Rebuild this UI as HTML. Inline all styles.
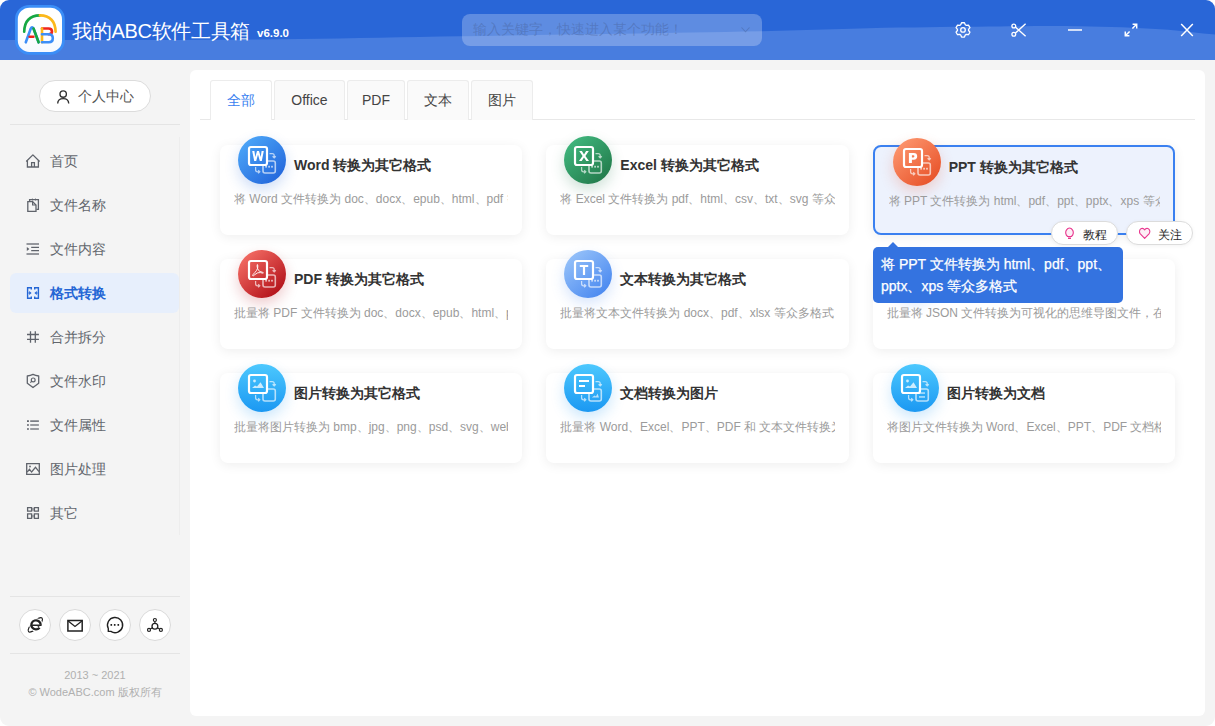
<!DOCTYPE html>
<html><head><meta charset="utf-8"><style>
*{box-sizing:border-box;margin:0;padding:0}
html,body{width:1215px;height:726px;overflow:hidden;background:#fff;font-family:"Liberation Sans",sans-serif}
#win{position:absolute;left:0;top:0;width:1215px;height:726px;background:#f4f4f4;border-radius:9px;overflow:hidden}
#hdr{position:absolute;left:0;top:0;width:1215px;height:60px;background:#2966d7}
#hdr svg{position:absolute;left:0;top:0}
.title{position:absolute;left:72px;top:18px;color:#fff;font-size:20px;line-height:26px;white-space:nowrap;letter-spacing:-0.3px}
.ver{position:absolute;left:257px;top:25.5px;color:#fff;font-size:11.5px;font-weight:bold;line-height:14px}
.search{position:absolute;left:462px;top:14px;width:300px;height:31.5px;border-radius:8px;background:rgba(255,255,255,0.25)}
.search span{position:absolute;left:11px;top:7px;font-size:14px;line-height:17px;color:rgba(70,95,150,0.42);white-space:nowrap}
.item{position:absolute;left:10px;width:169px;height:40px;border-radius:6px}
.item svg{position:absolute;left:10px;top:7px}
.item .tx{position:absolute;left:40px;top:11px;font-size:14px;line-height:18px;color:#62666d;white-space:nowrap}
.item.act{background:#e7effc}
.item.act .tx{color:#2466d5;font-weight:bold}
.pill{position:absolute;left:39px;top:80px;width:112px;height:32px;border-radius:16px;background:#fff;border:1px solid #dcdcdc}
.pill svg{position:absolute;left:16px;top:8px}
.pill span{position:absolute;left:38px;top:7px;font-size:14px;line-height:17px;color:#555;white-space:nowrap}
.hline{position:absolute;left:10px;width:170px;height:1px;background:#e4e4e4}
.vline{position:absolute;left:179px;top:137px;width:1px;height:398px;background:#ededed}
.cbtn{position:absolute;top:609px;width:32px;height:32px;border-radius:50%;background:#fff;border:1px solid #dadada}
.cbtn svg{position:absolute;left:0;top:0}
.foot{position:absolute;left:0;width:190px;text-align:center;font-size:11px;color:#b0b0b0;line-height:14px;white-space:nowrap}
#main{position:absolute;left:190px;top:70px;width:1015px;height:646px;background:#fff;border-radius:6px}
.tab{position:absolute;top:10px;height:40px;border:1px solid #ececec;border-bottom:none;background:#fafafa;border-radius:3px 3px 0 0;font-size:14px;color:#444;text-align:center;line-height:38px}
.tab.act{background:#fff;color:#3a7ff0}
.tabline{position:absolute;left:10px;top:49px;width:995px;height:1px;background:#e8e8e8}
.card{position:absolute;width:302.33px;height:90px;background:#fff;border-radius:8px;box-shadow:0 2px 12px rgba(0,0,0,0.07)}
.card .cir{position:absolute;left:18px;top:-9px;width:48px;height:48px;border-radius:50%}
.card .cir svg{position:absolute;left:0;top:0}
.card .t{position:absolute;left:74px;top:11px;font-size:14px;font-weight:bold;color:#333;line-height:18px;white-space:nowrap}
.card .d{position:absolute;left:14px;top:46px;width:274.3px;overflow:hidden;font-size:12px;color:#9b9b9b;line-height:16px;white-space:nowrap}
.card.hov{background:#edf2fd;border:2px solid #3a80f0}
.card.hov .cir{left:18px;top:-9px}
.card.hov .d{width:271px}
.hb{position:absolute;top:221px;height:24px;border-radius:12px;background:#fff;border:1px solid #dcdcdc;box-shadow:0 1px 4px rgba(0,0,0,0.05)}
.hb svg{position:absolute}
.hb span{position:absolute;left:31px;top:5px;font-size:11.7px;line-height:15px;color:#2a2a2a;white-space:nowrap}
.tip{position:absolute;left:873px;top:247px;width:250px;height:56px;background:#3473e0;border-radius:5px;color:#fff;font-size:14px;font-weight:normal;line-height:22px;padding:6px 0 0 8px;-webkit-text-stroke:0.25px #fff}
.tip:before{content:"";position:absolute;left:14px;top:-5px;border-left:6px solid transparent;border-right:6px solid transparent;border-bottom:6px solid #3473e0}
</style></head><body>
<div id="win">
 <div id="hdr">
  <svg width="1215" height="60"><path d="M0,40 C25.0,40.00 100.0,40.17 150,40 C200.0,39.83 248.3,39.63 300,39 C351.7,38.37 406.7,37.07 460,36.2 C513.3,35.33 570.0,34.62 620,33.8 C670.0,32.98 713.3,32.33 760,31.3 C806.7,30.27 860.0,28.42 900,27.6 C940.0,26.78 970.0,26.62 1000,26.4 C1030.0,26.18 1053.3,25.83 1080,26.3 C1106.7,26.77 1137.5,27.82 1160,29.2 C1182.5,30.58 1200.0,33.13 1215,34.6 C1230.0,36.07 1244.2,37.43 1250,38 L1250,60 L0,60 Z" fill="#487ddf"/></svg>
  <svg width="60" height="60" viewBox="0 0 60 60" style="left:10px;top:0px">
<defs><linearGradient id="lg" x1="0" y1="0" x2="0" y2="1"><stop offset="0.5" stop-color="#fff"/><stop offset="1" stop-color="#f6f9ff"/></linearGradient></defs><rect x="6.4" y="6.3" width="47.0" height="47.1" rx="13" fill="url(#lg)" stroke="#3b8ef7" stroke-width="2.8"/>
<path d="M14.2,31.8 Q14.5,15.8 29.9,15.4" fill="none" stroke="#16a843" stroke-width="2.6" stroke-linecap="round"/>
<path d="M29.9,15.4 Q45.2,15.8 45.6,31.8" fill="none" stroke="#fbb81b" stroke-width="2.6" stroke-linecap="round"/>
<path d="M15.8,42.3 L20.8,28.5 Q22,26 23.5,28.5 L28.6,42.3" fill="none" stroke="#3c8ef8" stroke-width="2.6" stroke-linecap="round" stroke-linejoin="round"/>
<path d="M23.5,28.5 L28.6,42.3" fill="none" stroke="#16a843" stroke-width="2.6" stroke-linecap="round"/>
<path d="M19.6,36.8 H23.4" fill="none" stroke="#f0241c" stroke-width="2.6" stroke-linecap="round"/>
<path d="M32,28.5 H38.5 Q42,28.5 42,31.5 Q42,34 38.8,34.3" fill="none" stroke="#f0241c" stroke-width="2.6" stroke-linecap="round"/>
<path d="M32,28.5 V42.3" fill="none" stroke="#fbb81b" stroke-width="2.6" stroke-linecap="round"/>
<path d="M32,34.3 H38.8 Q42.8,34.3 42.8,38.3 Q42.8,42.3 38.8,42.3 H32" fill="none" stroke="#3c8ef8" stroke-width="2.6" stroke-linecap="round"/>
</svg>
  <div class="title">我的ABC软件工具箱</div>
  <div class="ver">v6.9.0</div>
  <div class="search"><span>输入关键字，快速进入某个功能！</span><svg width="12" height="8" viewBox="0 0 12 8" style="left:278px;top:12px"><path d="M1.5,1.5 L5.5,5.8 L9.5,1.5" fill="none" stroke="rgba(70,95,150,0.42)" stroke-width="1.1"/></svg></div>
  
<svg width="20" height="20" viewBox="0 0 20 20" style="left:953px;top:20px"><path d="M7.72,4.79 L8.55,2.75 L11.45,2.75 L12.28,4.79 L13.29,5.37 L15.47,5.07 L16.92,7.58 L15.57,9.32 L15.57,10.48 L16.92,12.22 L15.47,14.73 L13.29,14.43 L12.28,15.01 L11.45,17.05 L8.55,17.05 L7.72,15.01 L6.71,14.43 L4.53,14.73 L3.08,12.22 L4.43,10.48 L4.43,9.32 L3.08,7.58 L4.53,5.07 L6.71,5.37 Z" fill="none" stroke="#fff" stroke-width="1.3" stroke-linejoin="round"/><circle cx="10" cy="9.9" r="2.3" fill="none" stroke="#fff" stroke-width="1.3"/></svg>
<svg width="20" height="20" viewBox="0 0 20 20" style="left:1009px;top:20px"><circle cx="4.8" cy="6" r="1.9" fill="none" stroke="#fff" stroke-width="1.3"/><circle cx="4.8" cy="14.2" r="1.9" fill="none" stroke="#fff" stroke-width="1.3"/><path d="M6.4,7.1 L16.6,16.3 M6.4,13.1 L16.6,3.7" stroke="#fff" stroke-width="1.4"/></svg>
<svg width="20" height="20" viewBox="0 0 20 20" style="left:1065px;top:20px"><path d="M3,10 H17" stroke="#fff" stroke-width="1.7"/></svg>
<svg width="20" height="20" viewBox="0 0 20 20" style="left:1121px;top:20px"><path d="M4.6,15.5 L8.6,11.5 M15.4,4.5 L11.4,8.5 M11.6,4.3 H15.7 V8.4 M4.3,11.6 V15.7 H8.4" fill="none" stroke="#fff" stroke-width="1.5"/></svg>
<svg width="20" height="20" viewBox="0 0 20 20" style="left:1177px;top:20px"><path d="M4.2,3.9 L15.8,16 M15.8,3.9 L4.2,16" stroke="#fff" stroke-width="1.5"/></svg>

 </div>
 <div id="side">
  <div class="pill"><svg width="14" height="16" viewBox="0 0 14 16"><circle cx="7.2" cy="5.1" r="3.2" fill="none" stroke="#333" stroke-width="1.4"/><path d="M1.7,14.6 Q1.7,9.6 7.2,9.6 Q12.7,9.6 12.7,14.6" fill="none" stroke="#333" stroke-width="1.4"/></svg><span>个人中心</span></div>
  <div class="hline" style="top:124px"></div>
  <div class="vline"></div>
  <div class="item" style="top:141px"><svg width="25" height="25" viewBox="0 0 25 25"><path d="M6.2,13.5 L12.9,6.9 L19.6,13.5" fill="none" stroke="#5f636b" stroke-width="1.3" stroke-linejoin="round"/><path d="M7.4,12.6 V19 H18.4 V12.6 M11.6,19 V14.6 H14.4 V19" fill="none" stroke="#5f636b" stroke-width="1.3"/></svg><div class="tx">首页</div></div>
<div class="item" style="top:185px"><svg width="25" height="25" viewBox="0 0 25 25"><path d="M9.6,8.9 V7.6 H18.4 V17.3 H16.4" fill="none" stroke="#5f636b" stroke-width="1.3"/><path d="M12.4,6.6 V8.4 M15.5,6.6 V8.4" stroke="#5f636b" stroke-width="1"/><path d="M7.8,9.6 H12.6 L16,13 V19.4 H7.8 Z" fill="none" stroke="#5f636b" stroke-width="1.3"/><path d="M12.6,9.6 V13 H16" fill="none" stroke="#5f636b" stroke-width="1.2"/></svg><div class="tx">文件名称</div></div>
<div class="item" style="top:229px"><svg width="25" height="25" viewBox="0 0 25 25"><path d="M6.5,8.1 H19 M6.5,17.9 H19" stroke="#5f636b" stroke-width="1.5" opacity="0.85"/><path d="M11.2,11.4 H19 M11.2,14.6 H19" stroke="#5f636b" stroke-width="1.3"/><path d="M6.8,11 L9.4,13 L6.8,15 Z" fill="#5f636b"/></svg><div class="tx">文件内容</div></div>
<div class="item act" style="top:273px"><svg width="25" height="25" viewBox="0 0 25 25"><path d="M11.3,9.4 V7.7 H7.6 V18.3 H11.3 V16.6 M14.7,9.4 V7.7 H18.4 V18.3 H14.7 V16.6" fill="none" stroke="#2466d5" stroke-width="1.4"/><path d="M7.6,13 H10 M16,13 H18.4" stroke="#2466d5" stroke-width="1.1" opacity="0.7"/><path d="M9.2,11.1 L11.6,13 L9.2,14.9 Z M16.8,11.1 L14.4,13 L16.8,14.9 Z" fill="#2466d5"/></svg><div class="tx">格式转换</div></div>
<div class="item" style="top:317px"><svg width="25" height="25" viewBox="0 0 25 25"><path d="M10.5,7.2 V18.8 M15.3,7.2 V18.8 M7,10.5 H18.9 M7,15.3 H18.9" fill="none" stroke="#5f636b" stroke-width="1.3"/></svg><div class="tx">合并拆分</div></div>
<div class="item" style="top:361px"><svg width="25" height="25" viewBox="0 0 25 25"><path d="M7.3,8 Q10.5,7.6 13,6.3 Q15.5,7.6 18.7,8 V15.3 L13,19.6 L7.3,15.3 Z" fill="none" stroke="#5f636b" stroke-width="1.3" stroke-linejoin="round"/><circle cx="13.2" cy="11.9" r="1.9" fill="none" stroke="#5f636b" stroke-width="1.2"/><path d="M11.8,13.3 L10.3,14.6" stroke="#5f636b" stroke-width="1.2"/></svg><div class="tx">文件水印</div></div>
<div class="item" style="top:405px"><svg width="25" height="25" viewBox="0 0 25 25"><path d="M7,9.1 H8.9 M7,13 H8.9 M7,17 H8.9" stroke="#5f636b" stroke-width="1.7"/><path d="M10.2,9.1 H18.9 M10.2,13 H18.9 M10.2,17 H18.9" stroke="#5f636b" stroke-width="1.6" opacity="0.8"/></svg><div class="tx">文件属性</div></div>
<div class="item" style="top:449px"><svg width="25" height="25" viewBox="0 0 25 25"><path d="M6.7,7.6 H19.3 V18.4 H6.7 Z" fill="none" stroke="#5f636b" stroke-width="1.3"/><path d="M7.2,16 L9.5,13.3 L11.6,16 L15.5,11.3 L19,15.6" fill="none" stroke="#5f636b" stroke-width="1.2"/><circle cx="10" cy="10.5" r="0.9" fill="#5f636b"/></svg><div class="tx">图片处理</div></div>
<div class="item" style="top:493px"><svg width="25" height="25" viewBox="0 0 25 25"><path d="M7.6,7.6 H11.6 V11.2 H7.6 Z M14.4,7.6 H18.4 V11.2 H14.4 Z M7.6,13.8 H11.6 V18.4 H7.6 Z M14.4,13.8 H18.4 V18.4 H14.4 Z" fill="none" stroke="#5f636b" stroke-width="1.3"/><path d="M11.6,9.4 H14.4 M11.6,16.1 H14.4" stroke="#5f636b" stroke-width="2.6" opacity="0.5"/></svg><div class="tx">其它</div></div>
  <div class="hline" style="top:596px"></div>
  <div class="cbtn" style="left:19px"><svg width="29" height="29" viewBox="0 0 29 29"><ellipse cx="15.3" cy="14.9" rx="9.6" ry="3.4" transform="rotate(-45 15.3 14.9)" fill="none" stroke="#222" stroke-width="1.2"/><path d="M20.7,14.85 A4.7,4.55 0 1 0 19.6,17.8" fill="none" stroke="#fff" stroke-width="4.2"/><path d="M20.7,14.85 A4.7,4.55 0 1 0 19.6,17.8" fill="none" stroke="#222" stroke-width="2.3"/><path d="M11.6,15.3 H21.6" stroke="#222" stroke-width="1.6"/></svg></div><div class="cbtn" style="left:59px"><svg width="29" height="29" viewBox="0 0 29 29"><path d="M7.9,10.6 H22.2 V21 H7.9 Z" fill="none" stroke="#222" stroke-width="1.5"/><path d="M8.2,11 L15,16.5 L21.9,11" fill="none" stroke="#222" stroke-width="1.3"/></svg></div><div class="cbtn" style="left:99px"><svg width="29" height="29" viewBox="0 0 29 29"><path d="M8.3,18.5 V21.4 H10.9 A7.6,7.6 0 1 0 8.3,18.5 Z" fill="none" stroke="#222" stroke-width="1.4" stroke-linejoin="round"/><rect x="10.5" y="14" width="1.6" height="1.8" fill="#222"/><rect x="13.9" y="14" width="1.6" height="1.8" fill="#222"/><rect x="17.5" y="14" width="1.6" height="1.8" fill="#222"/></svg></div><div class="cbtn" style="left:139px"><svg width="29" height="29" viewBox="0 0 29 29"><circle cx="14.9" cy="10" r="1.5" fill="none" stroke="#222" stroke-width="1.2"/><circle cx="9" cy="19.9" r="1.5" fill="none" stroke="#222" stroke-width="1.2"/><circle cx="20.9" cy="19.9" r="1.5" fill="none" stroke="#222" stroke-width="1.2"/><circle cx="14.9" cy="16.3" r="2.9" fill="none" stroke="#222" stroke-width="1.3"/><path d="M14.9,11.5 V13.4 M12.4,17.8 L10.3,19.1 M17.4,17.8 L19.6,19.1" stroke="#222" stroke-width="1.2"/></svg></div>
  <div class="hline" style="top:653px"></div>
  <div class="foot" style="top:668px">2013 ~ 2021</div>
  <div class="foot" style="top:685px">© WodeABC.com 版权所有</div>
 </div>
 <div id="main">
  <div class="tabline"></div>
  <div class="tab act" style="left:20px;width:62px">全部</div>
  <div class="tab" style="left:84px;width:71px">Office</div>
  <div class="tab" style="left:157px;width:58px">PDF</div>
  <div class="tab" style="left:217px;width:62px">文本</div>
  <div class="tab" style="left:281px;width:62px">图片</div>
  <div class="card" style="left:30.00px;top:75px"><div class="cir" style="box-shadow:0 6px 14px #2468dc38"><svg width="48" height="48" viewBox="0 0 48 48"><defs><linearGradient id="g0" gradientUnits="userSpaceOnUse" x1="7" y1="5" x2="41" y2="43"><stop offset="0" stop-color="#4ba4f7"/><stop offset="1" stop-color="#2468dc"/></linearGradient></defs><circle cx="24" cy="24" r="24" fill="url(#g0)"/><rect x="25" y="25" width="12.3" height="12" rx="2" fill="none" stroke="rgba(255,255,255,0.65)" stroke-width="1.6"/><rect x="27.200000000000003" y="29.8" width="1.8" height="1.8" fill="rgba(255,255,255,0.65)"/><rect x="30.200000000000003" y="29.8" width="1.8" height="1.8" fill="rgba(255,255,255,0.65)"/><rect x="33.1" y="29.8" width="1.8" height="1.8" fill="rgba(255,255,255,0.65)"/><path d="M31.5,17.6 H34.2 Q36.2,17.6 36.2,19.6 V21" fill="none" stroke="rgba(255,255,255,0.65)" stroke-width="1.25"/><path d="M34.6,20.2 L36.2,21.8 L37.8,20.2" fill="none" stroke="rgba(255,255,255,0.65)" stroke-width="1.25"/><path d="M17.6,31 V33.8 Q17.6,35.8 19.6,35.8 H21" fill="none" stroke="rgba(255,255,255,0.65)" stroke-width="1.25"/><path d="M20.2,34.2 L21.8,35.8 L20.2,37.4" fill="none" stroke="rgba(255,255,255,0.65)" stroke-width="1.25"/><rect x="11" y="11" width="18" height="18" rx="2" fill="url(#g0)" stroke="#fff" stroke-width="2.2"/><path d="M14.2,15 L16.2,25 H18.2 L20,18.5 L21.8,25 H23.8 L25.8,15 H23.6 L22.7,21 L21,15 H19 L17.3,21 L16.4,15 Z" fill="#fff"/></svg></div><div class="t">Word 转换为其它格式</div><div class="d">将 Word 文件转换为 doc、docx、epub、html、pdf 等众多格式</div></div><div class="card" style="left:356.33px;top:75px"><div class="cir" style="box-shadow:0 6px 14px #237c4c38"><svg width="48" height="48" viewBox="0 0 48 48"><defs><linearGradient id="g1" gradientUnits="userSpaceOnUse" x1="7" y1="5" x2="41" y2="43"><stop offset="0" stop-color="#3fb57c"/><stop offset="1" stop-color="#237c4c"/></linearGradient></defs><circle cx="24" cy="24" r="24" fill="url(#g1)"/><rect x="25" y="25" width="12.3" height="12" rx="2" fill="none" stroke="rgba(255,255,255,0.65)" stroke-width="1.6"/><rect x="27.200000000000003" y="29.8" width="1.8" height="1.8" fill="rgba(255,255,255,0.65)"/><rect x="30.200000000000003" y="29.8" width="1.8" height="1.8" fill="rgba(255,255,255,0.65)"/><rect x="33.1" y="29.8" width="1.8" height="1.8" fill="rgba(255,255,255,0.65)"/><path d="M31.5,17.6 H34.2 Q36.2,17.6 36.2,19.6 V21" fill="none" stroke="rgba(255,255,255,0.65)" stroke-width="1.25"/><path d="M34.6,20.2 L36.2,21.8 L37.8,20.2" fill="none" stroke="rgba(255,255,255,0.65)" stroke-width="1.25"/><path d="M17.6,31 V33.8 Q17.6,35.8 19.6,35.8 H21" fill="none" stroke="rgba(255,255,255,0.65)" stroke-width="1.25"/><path d="M20.2,34.2 L21.8,35.8 L20.2,37.4" fill="none" stroke="rgba(255,255,255,0.65)" stroke-width="1.25"/><rect x="11" y="11" width="18" height="18" rx="2" fill="url(#g1)" stroke="#fff" stroke-width="2.2"/><path d="M15.2,15 H17.9 L20,18.6 L22.1,15 H24.8 L21.4,20 L25,25 H22.3 L20,21.4 L17.7,25 H15 L18.6,20 Z" fill="#fff"/></svg></div><div class="t">Excel 转换为其它格式</div><div class="d">将 Excel 文件转换为 pdf、html、csv、txt、svg 等众多格式</div></div><div class="card hov" style="left:682.67px;top:75px"><div class="cir" style="box-shadow:0 6px 14px #e8532a38"><svg width="48" height="48" viewBox="0 0 48 48"><defs><linearGradient id="g2" gradientUnits="userSpaceOnUse" x1="7" y1="5" x2="41" y2="43"><stop offset="0" stop-color="#fc946c"/><stop offset="1" stop-color="#e8532a"/></linearGradient></defs><circle cx="24" cy="24" r="24" fill="url(#g2)"/><rect x="25" y="25" width="12.3" height="12" rx="2" fill="none" stroke="rgba(255,255,255,0.65)" stroke-width="1.6"/><rect x="27.200000000000003" y="29.8" width="1.8" height="1.8" fill="rgba(255,255,255,0.65)"/><rect x="30.200000000000003" y="29.8" width="1.8" height="1.8" fill="rgba(255,255,255,0.65)"/><rect x="33.1" y="29.8" width="1.8" height="1.8" fill="rgba(255,255,255,0.65)"/><path d="M31.5,17.6 H34.2 Q36.2,17.6 36.2,19.6 V21" fill="none" stroke="rgba(255,255,255,0.65)" stroke-width="1.25"/><path d="M34.6,20.2 L36.2,21.8 L37.8,20.2" fill="none" stroke="rgba(255,255,255,0.65)" stroke-width="1.25"/><path d="M17.6,31 V33.8 Q17.6,35.8 19.6,35.8 H21" fill="none" stroke="rgba(255,255,255,0.65)" stroke-width="1.25"/><path d="M20.2,34.2 L21.8,35.8 L20.2,37.4" fill="none" stroke="rgba(255,255,255,0.65)" stroke-width="1.25"/><rect x="11" y="11" width="18" height="18" rx="2" fill="url(#g2)" stroke="#fff" stroke-width="2.2"/><path d="M15.9,14.9 H20.8 Q24.2,14.9 24.2,18.35 Q24.2,21.8 20.8,21.8 H18.9 V25.1 H15.9 Z M18.9,17.2 V19.5 H20.4 Q21.4,19.5 21.4,18.35 Q21.4,17.2 20.4,17.2 Z" fill="#fff" fill-rule="evenodd"/></svg></div><div class="t">PPT 转换为其它格式</div><div class="d">将 PPT 文件转换为 html、pdf、ppt、pptx、xps 等众多格式</div></div><div class="card" style="left:30.00px;top:189px"><div class="cir" style="box-shadow:0 6px 14px #b3121a38"><svg width="48" height="48" viewBox="0 0 48 48"><defs><linearGradient id="g3" gradientUnits="userSpaceOnUse" x1="7" y1="5" x2="41" y2="43"><stop offset="0" stop-color="#f26a62"/><stop offset="1" stop-color="#b3121a"/></linearGradient></defs><circle cx="24" cy="24" r="24" fill="url(#g3)"/><rect x="25" y="25" width="12.3" height="12" rx="2" fill="none" stroke="rgba(255,255,255,0.65)" stroke-width="1.6"/><rect x="27.200000000000003" y="29.8" width="1.8" height="1.8" fill="rgba(255,255,255,0.65)"/><rect x="30.200000000000003" y="29.8" width="1.8" height="1.8" fill="rgba(255,255,255,0.65)"/><rect x="33.1" y="29.8" width="1.8" height="1.8" fill="rgba(255,255,255,0.65)"/><path d="M31.5,17.6 H34.2 Q36.2,17.6 36.2,19.6 V21" fill="none" stroke="rgba(255,255,255,0.65)" stroke-width="1.25"/><path d="M34.6,20.2 L36.2,21.8 L37.8,20.2" fill="none" stroke="rgba(255,255,255,0.65)" stroke-width="1.25"/><path d="M17.6,31 V33.8 Q17.6,35.8 19.6,35.8 H21" fill="none" stroke="rgba(255,255,255,0.65)" stroke-width="1.25"/><path d="M20.2,34.2 L21.8,35.8 L20.2,37.4" fill="none" stroke="rgba(255,255,255,0.65)" stroke-width="1.25"/><rect x="11" y="11" width="18" height="18" rx="2" fill="url(#g3)" stroke="#fff" stroke-width="2.2"/><path d="M19.4,14.5 Q18.6,15.5 19.6,18.5 Q20.5,21 22,21.5 Q24.8,22.2 25.4,22.8 Q25.2,23.6 22.5,22.6 Q19.8,22 17,24.5 Q14.8,26.6 14.6,25.6 Q14.8,24.4 16.8,22.6 Q18.8,20.6 19.6,18.2 Q20.2,15.4 19.4,14.5 Z" fill="none" stroke="#fff" stroke-width="0.9"/></svg></div><div class="t">PDF 转换为其它格式</div><div class="d">批量将 PDF 文件转换为 doc、docx、epub、html、pdf 等格式</div></div><div class="card" style="left:356.33px;top:189px"><div class="cir" style="box-shadow:0 6px 14px #4a89f038"><svg width="48" height="48" viewBox="0 0 48 48"><defs><linearGradient id="g4" gradientUnits="userSpaceOnUse" x1="7" y1="5" x2="41" y2="43"><stop offset="0" stop-color="#94c0f9"/><stop offset="1" stop-color="#4a89f0"/></linearGradient></defs><circle cx="24" cy="24" r="24" fill="url(#g4)"/><rect x="25" y="25" width="12.3" height="12" rx="2" fill="none" stroke="rgba(255,255,255,0.65)" stroke-width="1.6"/><rect x="27.200000000000003" y="29.8" width="1.8" height="1.8" fill="rgba(255,255,255,0.65)"/><rect x="30.200000000000003" y="29.8" width="1.8" height="1.8" fill="rgba(255,255,255,0.65)"/><rect x="33.1" y="29.8" width="1.8" height="1.8" fill="rgba(255,255,255,0.65)"/><path d="M31.5,17.6 H34.2 Q36.2,17.6 36.2,19.6 V21" fill="none" stroke="rgba(255,255,255,0.65)" stroke-width="1.25"/><path d="M34.6,20.2 L36.2,21.8 L37.8,20.2" fill="none" stroke="rgba(255,255,255,0.65)" stroke-width="1.25"/><path d="M17.6,31 V33.8 Q17.6,35.8 19.6,35.8 H21" fill="none" stroke="rgba(255,255,255,0.65)" stroke-width="1.25"/><path d="M20.2,34.2 L21.8,35.8 L20.2,37.4" fill="none" stroke="rgba(255,255,255,0.65)" stroke-width="1.25"/><rect x="11" y="11" width="18" height="18" rx="2" fill="url(#g4)" stroke="#fff" stroke-width="2.2"/><path d="M15.8,15 H24.2 V17 H21.1 V25 H18.9 V17 H15.8 Z" fill="#fff"/></svg></div><div class="t">文本转换为其它格式</div><div class="d">批量将文本文件转换为 docx、pdf、xlsx 等众多格式</div></div><div class="card" style="left:682.67px;top:189px"><div class="cir" style="box-shadow:0 6px 14px #4a89f038"><svg width="48" height="48" viewBox="0 0 48 48"><defs><linearGradient id="g5" gradientUnits="userSpaceOnUse" x1="7" y1="5" x2="41" y2="43"><stop offset="0" stop-color="#94c0f9"/><stop offset="1" stop-color="#4a89f0"/></linearGradient></defs><circle cx="24" cy="24" r="24" fill="url(#g5)"/><rect x="25" y="25" width="12.3" height="12" rx="2" fill="none" stroke="rgba(255,255,255,0.65)" stroke-width="1.6"/><rect x="27.200000000000003" y="29.8" width="1.8" height="1.8" fill="rgba(255,255,255,0.65)"/><rect x="30.200000000000003" y="29.8" width="1.8" height="1.8" fill="rgba(255,255,255,0.65)"/><rect x="33.1" y="29.8" width="1.8" height="1.8" fill="rgba(255,255,255,0.65)"/><path d="M31.5,17.6 H34.2 Q36.2,17.6 36.2,19.6 V21" fill="none" stroke="rgba(255,255,255,0.65)" stroke-width="1.25"/><path d="M34.6,20.2 L36.2,21.8 L37.8,20.2" fill="none" stroke="rgba(255,255,255,0.65)" stroke-width="1.25"/><path d="M17.6,31 V33.8 Q17.6,35.8 19.6,35.8 H21" fill="none" stroke="rgba(255,255,255,0.65)" stroke-width="1.25"/><path d="M20.2,34.2 L21.8,35.8 L20.2,37.4" fill="none" stroke="rgba(255,255,255,0.65)" stroke-width="1.25"/><rect x="11" y="11" width="18" height="18" rx="2" fill="url(#g5)" stroke="#fff" stroke-width="2.2"/></svg></div><div class="t">JSON 转换为思维导图</div><div class="d">批量将 JSON 文件转换为可视化的思维导图文件，在线编辑</div></div><div class="card" style="left:30.00px;top:303px"><div class="cir" style="box-shadow:0 6px 14px #1b98f238"><svg width="48" height="48" viewBox="0 0 48 48"><defs><linearGradient id="g6" gradientUnits="userSpaceOnUse" x1="24" y1="0" x2="24" y2="48"><stop offset="0" stop-color="#4cc8fe"/><stop offset="1" stop-color="#1b98f2"/></linearGradient></defs><circle cx="24" cy="24" r="24" fill="url(#g6)"/><rect x="25" y="25" width="12.3" height="12" rx="2" fill="none" stroke="rgba(255,255,255,0.65)" stroke-width="1.6"/><path d="M31.5,17.6 H34.2 Q36.2,17.6 36.2,19.6 V21" fill="none" stroke="rgba(255,255,255,0.65)" stroke-width="1.25"/><path d="M34.6,20.2 L36.2,21.8 L37.8,20.2" fill="none" stroke="rgba(255,255,255,0.65)" stroke-width="1.25"/><path d="M17.6,31 V33.8 Q17.6,35.8 19.6,35.8 H21" fill="none" stroke="rgba(255,255,255,0.65)" stroke-width="1.25"/><path d="M20.2,34.2 L21.8,35.8 L20.2,37.4" fill="none" stroke="rgba(255,255,255,0.65)" stroke-width="1.25"/><rect x="11" y="11" width="18" height="18" rx="2" fill="url(#g6)" stroke="#fff" stroke-width="2.2"/><circle cx="16.5" cy="17" r="1.4" fill="rgba(255,255,255,0.75)"/><path d="M14,24 L17,21.5 L19,22.6 L22.5,18.2 L26,24 Z" fill="rgba(255,255,255,0.75)"/></svg></div><div class="t">图片转换为其它格式</div><div class="d">批量将图片转换为 bmp、jpg、png、psd、svg、webp 等格式</div></div><div class="card" style="left:356.33px;top:303px"><div class="cir" style="box-shadow:0 6px 14px #1b98f238"><svg width="48" height="48" viewBox="0 0 48 48"><defs><linearGradient id="g7" gradientUnits="userSpaceOnUse" x1="24" y1="0" x2="24" y2="48"><stop offset="0" stop-color="#4cc8fe"/><stop offset="1" stop-color="#1b98f2"/></linearGradient></defs><circle cx="24" cy="24" r="24" fill="url(#g7)"/><rect x="25" y="25" width="12.3" height="12" rx="2" fill="none" stroke="rgba(255,255,255,0.65)" stroke-width="1.6"/><path d="M27.8,33.6 L30.5,31.5 L32,32.5 L33.5,29.5 L35,33.6 Z" fill="rgba(255,255,255,0.65)"/><path d="M31.5,17.6 H34.2 Q36.2,17.6 36.2,19.6 V21" fill="none" stroke="rgba(255,255,255,0.65)" stroke-width="1.25"/><path d="M34.6,20.2 L36.2,21.8 L37.8,20.2" fill="none" stroke="rgba(255,255,255,0.65)" stroke-width="1.25"/><path d="M17.6,31 V33.8 Q17.6,35.8 19.6,35.8 H21" fill="none" stroke="rgba(255,255,255,0.65)" stroke-width="1.25"/><path d="M20.2,34.2 L21.8,35.8 L20.2,37.4" fill="none" stroke="rgba(255,255,255,0.65)" stroke-width="1.25"/><rect x="11" y="11" width="18" height="18" rx="2" fill="url(#g7)" stroke="#fff" stroke-width="2.2"/><rect x="15" y="16" width="10" height="2" fill="#fff"/><rect x="15" y="21" width="6" height="2" fill="#fff"/></svg></div><div class="t">文档转换为图片</div><div class="d">批量将 Word、Excel、PPT、PDF 和 文本文件转换为图片</div></div><div class="card" style="left:682.67px;top:303px"><div class="cir" style="box-shadow:0 6px 14px #1b98f238"><svg width="48" height="48" viewBox="0 0 48 48"><defs><linearGradient id="g8" gradientUnits="userSpaceOnUse" x1="24" y1="0" x2="24" y2="48"><stop offset="0" stop-color="#4cc8fe"/><stop offset="1" stop-color="#1b98f2"/></linearGradient></defs><circle cx="24" cy="24" r="24" fill="url(#g8)"/><rect x="25" y="25" width="12.3" height="12" rx="2" fill="none" stroke="rgba(255,255,255,0.65)" stroke-width="1.6"/><rect x="28" y="28.3" width="6" height="1.5" fill="rgba(255,255,255,0.65)"/><rect x="28" y="32.2" width="6" height="1.5" fill="rgba(255,255,255,0.65)"/><path d="M31.5,17.6 H34.2 Q36.2,17.6 36.2,19.6 V21" fill="none" stroke="rgba(255,255,255,0.65)" stroke-width="1.25"/><path d="M34.6,20.2 L36.2,21.8 L37.8,20.2" fill="none" stroke="rgba(255,255,255,0.65)" stroke-width="1.25"/><path d="M17.6,31 V33.8 Q17.6,35.8 19.6,35.8 H21" fill="none" stroke="rgba(255,255,255,0.65)" stroke-width="1.25"/><path d="M20.2,34.2 L21.8,35.8 L20.2,37.4" fill="none" stroke="rgba(255,255,255,0.65)" stroke-width="1.25"/><rect x="11" y="11" width="18" height="18" rx="2" fill="url(#g8)" stroke="#fff" stroke-width="2.2"/><circle cx="16.5" cy="17" r="1.4" fill="rgba(255,255,255,0.75)"/><path d="M14,24 L17,21.5 L19,22.6 L22.5,18.2 L26,24 Z" fill="rgba(255,255,255,0.75)"/></svg></div><div class="t">图片转换为文档</div><div class="d">将图片文件转换为 Word、Excel、PPT、PDF 文档格式</div></div>
 </div>
 <div class="tip">将 PPT 文件转换为 html、pdf、ppt、<br>pptx、xps 等众多格式</div>
 <div class="hb" style="left:1051px;width:67px"><svg width="12" height="14" viewBox="0 0 12 14" style="left:13px;top:5px"><path d="M2.6,9.5 C0.4,7.8 0.3,4.8 1.4,3.1 C2.4,1.5 3.5,1 4.5,1 C5.5,1 6.6,1.5 7.6,3.1 C8.7,4.8 8.6,7.8 6.4,9.5 Z" fill="#fdeef6" stroke="#e9388f" stroke-width="1.1"/><path d="M3,11.3 H6" stroke="#e9388f" stroke-width="1.4"/></svg><span>教程</span></div>
 <div class="hb" style="left:1126px;width:67px"><svg width="13" height="14" viewBox="0 0 13 14" style="left:12px;top:5px"><path d="M5.65,11.4 L1.3,6.8 C-0.1,5.2 0.3,2.3 2.4,1.5 C3.9,1 5,1.8 5.65,2.9 C6.3,1.8 7.4,1 8.9,1.5 C11,2.3 11.4,5.2 10,6.8 Z" fill="#fdeef6" stroke="#e9388f" stroke-width="1.1" stroke-linejoin="round"/></svg><span>关注</span></div>
</div>
</body></html>
